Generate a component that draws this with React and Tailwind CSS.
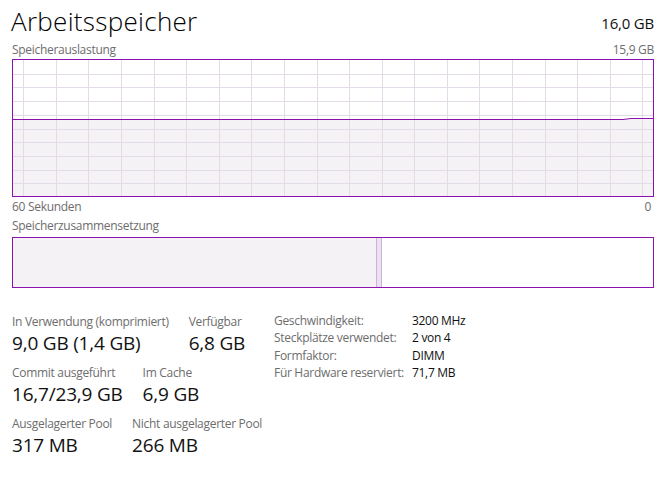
import React from 'react';

const PURPLE = '#8b12ae';

// Verlaufsgrafik: Raster + gefuellte Flaeche unter der Linie
function UsageGraph() {
  const w = 640, h = 136;
  const vLines = Array.from({ length: 20 }, (_, i) => 10.3 + i * 32.58).filter(x => x < w);
  const hLines = Array.from({ length: 9 }, (_, i) => (i + 1) * 13.7);
  const lineY = 59.5;
  return (
    <svg width={w} height={h} className="block">
      <path d={`M0 ${lineY} L610 ${lineY} L618 ${lineY - 1} L${w} ${lineY - 1} L${w} ${h} L0 ${h} Z`} fill="#f4f2f4" />
      {hLines.map(y => (
        <line key={'h' + y} x1="0" x2={w} y1={Math.round(y) + 0.5} y2={Math.round(y) + 0.5} stroke="#e3dbe7" strokeWidth="1" />
      ))}
      {vLines.map(x => (
        <line key={'v' + x} x1={Math.round(x) + 0.5} x2={Math.round(x) + 0.5} y1="0" y2={h} stroke="#e3dbe7" strokeWidth="1" />
      ))}
      <path d={`M0 ${lineY} L610 ${lineY} L618 ${lineY - 1} L${w} ${lineY - 1}`} fill="none" stroke={PURPLE} strokeWidth="1" />
    </svg>
  );
}

function Stat({ label, value }) {
  return (
    <div className="flex flex-col whitespace-nowrap">
      <span className="text-[12px] leading-[16px] tracking-[-0.3px] text-[#6d6d6d]">{label}</span>
      <span className="text-[19px] leading-[27px] tracking-[-0.2px] text-[#111]">{value}</span>
    </div>
  );
}

export default function App() {
  const details = [
    ['Geschwindigkeit:', '3200 MHz'],
    ['Steckplätze verwendet:', '2 von 4'],
    ['Formfaktor:', 'DIMM'],
    ['Für Hardware reserviert:', '71,7 MB'],
  ];

  return (
    <div className="w-[670px] h-[479px] bg-white overflow-hidden pl-[12px] pr-[16px] font-['Segoe_UI','Open_Sans',sans-serif]">
      <div className="flex items-end justify-between h-[37px]">
        <span className="text-[26px] leading-[32px] font-light text-black -ml-[1px] tracking-[0.3px]">Arbeitsspeicher</span>
        <span className="text-[15px] leading-[24px] text-[#111] mb-[2px] tracking-[-0.2px]">16,0 GB</span>
      </div>
      <div className="flex justify-between text-[12px] leading-[16px] tracking-[-0.3px] text-[#6d6d6d] mt-[5px]">
        <span>Speicherauslastung</span>
        <span>15,9 GB</span>
      </div>
      <div className="mt-[1px] w-[642px] h-[138px] border border-[#8b12ae]">
        <UsageGraph />
      </div>
      <div className="flex justify-between text-[12px] leading-[16px] tracking-[-0.3px] text-[#6d6d6d] mt-[2px]">
        <span>60 Sekunden</span>
        <span className="pr-[3px]">0</span>
      </div>
      <div className="text-[12px] leading-[16px] tracking-[-0.3px] text-[#6d6d6d] mt-[3px]">Speicherzusammensetzung</div>
      <div className="mt-[3px] w-[642px] h-[51px] border border-[#8b12ae] flex">
        <div className="w-[363px] bg-[#f4f2f4]" />
        <div className="w-[6px] bg-[#ece1f2] border-x border-[#cdb2da]" />
        <div className="flex-1 bg-white" />
      </div>

      <div className="flex mt-[26px]">
        <div className="flex flex-col gap-[8px] w-[262px]">
          <div className="flex gap-[20px]">
            <Stat label="In Verwendung (komprimiert)" value="9,0 GB (1,4 GB)" />
            <Stat label="Verfügbar" value="6,8 GB" />
          </div>
          <div className="flex gap-[20px]">
            <Stat label="Commit ausgeführt" value="16,7/23,9 GB" />
            <Stat label="Im Cache" value="6,9 GB" />
          </div>
          <div className="flex gap-[20px]">
            <Stat label="Ausgelagerter Pool" value="317 MB" />
            <Stat label="Nicht ausgelagerter Pool" value="266 MB" />
          </div>
        </div>
        <div className="grid grid-cols-[138px_auto] text-[12px] leading-[17.4px] tracking-[-0.3px] -mt-[2px] self-start whitespace-nowrap">
          {details.map(([k, v]) => (
            <React.Fragment key={k}>
              <span className="text-[#6d6d6d]">{k}</span>
              <span className="text-[#111]">{v}</span>
            </React.Fragment>
          ))}
        </div>
      </div>
    </div>
  );
}
